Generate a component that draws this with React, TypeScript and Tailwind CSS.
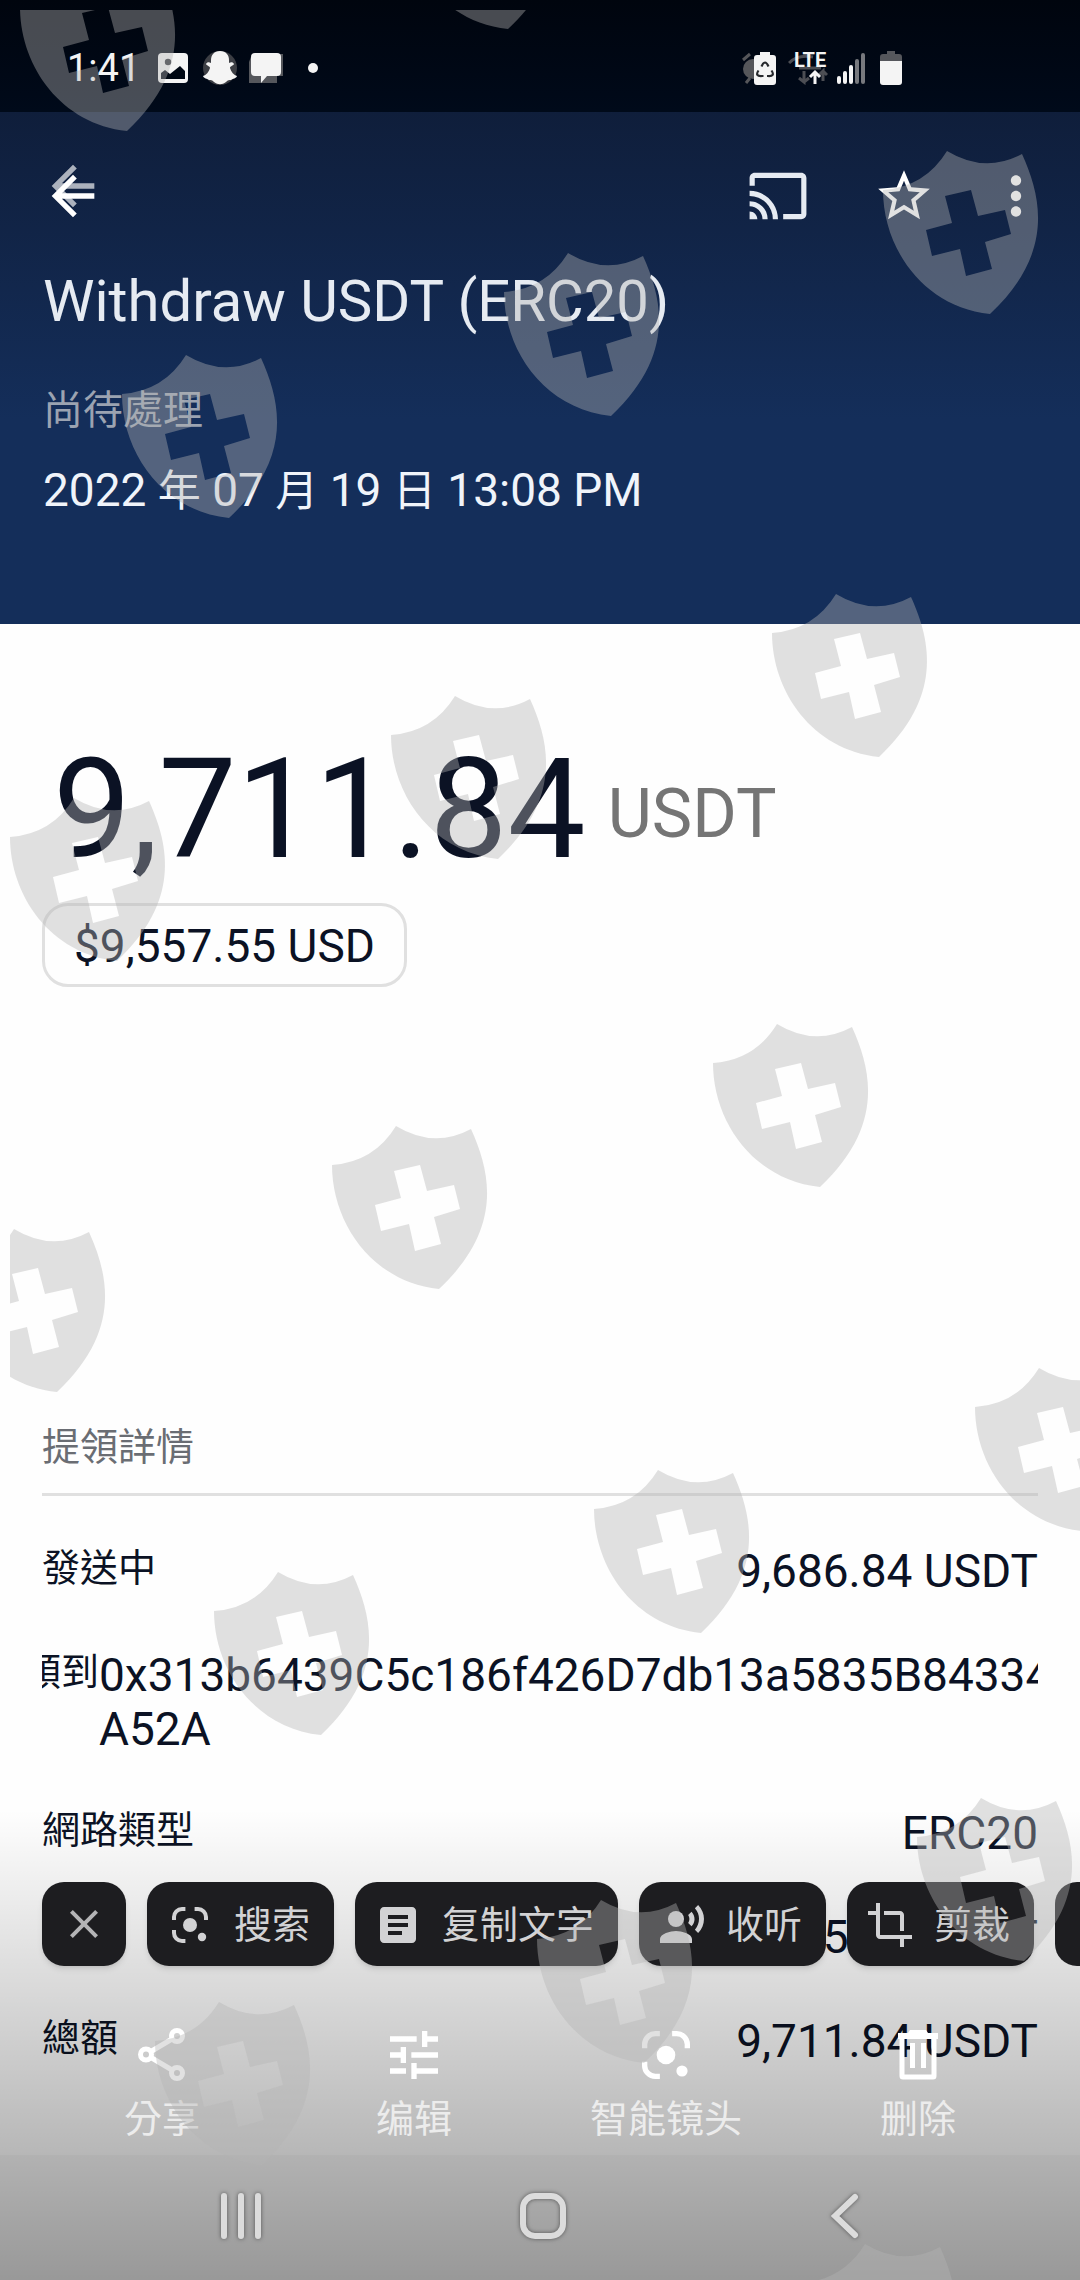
import type { ReactNode } from "react";
import {
  MdArrowBack,
  MdArticle,
  MdCast,
  MdClose,
  MdCrop,
  MdMoreVert,
  MdRecordVoiceOver,
  MdStarBorder,
  MdTune,
} from "react-icons/md";

function LensIcon({ className }: { className: string }) {
  return (
    <svg viewBox="0 0 24 24" className={className} fill="none" stroke="currentColor" strokeWidth="2" aria-hidden="true">
      <path d="M4 9.5V8a4 4 0 0 1 4-4h1.7M14.3 4H16a4 4 0 0 1 4 4v1.5M4 14.5V16a4 4 0 0 0 4 4h1.7" />
      <circle cx="12" cy="12" r="3.5" fill="currentColor" stroke="none" />
      <circle cx="18" cy="18" r="2.1" fill="currentColor" stroke="none" />
    </svg>
  );
}

function ShareIcon() {
  return (
    <svg viewBox="0 0 64 64" className="size-16" fill="none" stroke="currentColor" strokeWidth="5" aria-hidden="true">
      <path d="M21 28.500L42 16M21 34.500L42 47" />
      <circle cx="16" cy="31.500" r="5.500" />
      <circle cx="47" cy="13" r="5.500" />
      <circle cx="47" cy="50" r="5.500" />
    </svg>
  );
}

function TrashIcon() {
  return (
    <svg viewBox="0 0 64 64" className="size-16" fill="none" stroke="currentColor" aria-hidden="true">
      <path d="M12 10h10l2-3h16l2 3h10v6H12z" fill="currentColor" stroke="none" />
      <path d="M16 15v38a1 1 0 0 0 1 1h30a1 1 0 0 0 1-1V15" strokeWidth="5" />
      <path d="M26.500 20v25M37.500 20v25" strokeWidth="5" />
    </svg>
  );
}

const shields = [
  [20, -33], [401, -135],
  [883, 150], [504, 252], [122, 354],
  [772, 593], [391, 695], [10, 797],
  [713, 1023], [332, 1125], [-50, 1228],
  [975, 1367], [594, 1469], [214, 1571],
  [917, 1797], [537, 1899], [155, 2001],
];

const SHIELD_PATH =
  "M0 40Q42 37 64 1Q102 24 139 4C160 50 170 105 107 164C40 157 0 98 0 40ZM62 46L69 73L43 80L49 106L77 99L83 126L109 119L102 92L128 84L122 60L95 66L88 40Z";

function Watermark() {
  return (
    <div className="pointer-events-none absolute top-2.5 right-0 bottom-0 left-2.5 overflow-hidden" aria-hidden="true">
      <svg className="h-full w-full">
        {shields.map(([x, y]) => (
          <path
            key={`${x}:${y}`}
            d={SHIELD_PATH}
            transform={`translate(${x - 10} ${y - 10})`}
            fill="#b3b3b3"
            fillOpacity="0.4"
            fillRule="evenodd"
          />
        ))}
        <path d={SHIELD_PATH} transform="translate(791 2233)" fill="#b3b3b3" fillOpacity="0.4" fillRule="evenodd" />
      </svg>
    </div>
  );
}

function StatusBar() {
  return (
    <div className="flex h-28 items-center bg-linear-to-b from-[#00050e] to-[#000a1a] pt-6 pl-[67px] text-[#f4f4f4]">
      <span className="w-[91px] text-[38px] leading-[40px]">1:41</span>
      <svg viewBox="0 0 30 30" className="size-[30px]" aria-hidden="true">
        <rect width="30" height="30" rx="4" fill="currentColor" />
        <circle cx="10" cy="9" r="3.200" fill="#33363c" />
        <path d="M3 26v-6l4-3 5 4 10-8 5 5v8z" fill="#000814" />
      </svg>
      <svg viewBox="0 0 36 36" className="ml-3.5 size-9" aria-hidden="true">
        <circle cx="18" cy="18" r="17" fill="#3c3e44" />
        <path
          d="M18 1c6 0 9 4 9 9v3c2-1 4-1 5 1-1 2-4 2-4 4 1 4 4 7 7 8-1 3-4 2-6 4-2 0-3 0-5 2-4 3-8 3-12 0-2-2-3-2-5-2-2-2-5-1-6-4 3-1 6-4 7-8 0-2-3-2-4-4 1-2 3-2 5-1v-3c0-5 3-9 9-9z"
          fill="currentColor"
        />
      </svg>
      <svg viewBox="0 0 36 32" className="ml-2.5 h-8 w-9" aria-hidden="true">
        <path d="M4 2h31v22h-6v7H1V10z" fill="#55575c" />
        <path d="M7 1h22a4 4 0 0 1 4 4v15a4 4 0 0 1-4 4H19l-6 7v-7H7a4 4 0 0 1-4-4V5a4 4 0 0 1 4-4z" fill="currentColor" />
      </svg>
      <span className="ml-6 size-2.5 rounded-full bg-current" />
      <div className="mr-[178px] ml-auto flex items-center">
        <svg viewBox="0 0 34 34" className="h-[34px] w-[34px]" aria-hidden="true">
          <circle cx="11" cy="18" r="10" fill="#55565a" />
          <path d="M1 9l7-6M4 32l4-5" stroke="#55565a" strokeWidth="3" />
          <path d="M18 1h10v3h3a3 3 0 0 1 3 3v24a3 3 0 0 1-3 3H15a3 3 0 0 1-3-3V7a3 3 0 0 1 3-3h3z" fill="currentColor" />
          <path
            d="M19.500 15.500q3.500-8 7 0M29.500 19.500q4 6-3.500 5.500h-1M16.500 19.500q-4 6 3.500 5.500h1.500"
            fill="none"
            stroke="#26282c"
            strokeWidth="2.2"
          />
        </svg>
        <div className="relative ml-3 h-[34px] w-10">
          <svg viewBox="0 0 40 34" className="absolute inset-0 h-full w-full" fill="none" aria-hidden="true">
            <path d="M1 12q9-9 24-6M11 17h22M16 20v11l-5-4m5 4l5-4M35 30V20l-4 4m4-4l4 4" stroke="#4c4e54" strokeWidth="3" />
            <path d="M27 33V21M22 26l5-5 5 5" stroke="currentColor" strokeWidth="3" />
          </svg>
          <span className="absolute top-0 left-1.5 text-[20px] leading-[18px] font-bold">LTE</span>
        </div>
        <svg viewBox="0 0 30 34" className="ml-2 h-[34px] w-[30px]" strokeLinecap="round" strokeWidth="4" aria-hidden="true">
          <path d="M3 27v4M9 22v9M15 16v15" stroke="currentColor" />
          <path d="M21 10v21M27 4v27" stroke="#77797e" />
        </svg>
        <svg viewBox="0 0 22 34" className="ml-3.5 h-[34px] w-[22px]" aria-hidden="true">
          <path d="M7 0h8v3h4a3 3 0 0 1 3 3v5H0V6a3 3 0 0 1 3-3h4z" fill="#55575c" />
          <path d="M0 10h22v21a3 3 0 0 1-3 3H3a3 3 0 0 1-3-3z" fill="currentColor" />
        </svg>
      </div>
    </div>
  );
}

function DateUnit({ children }: { children: string }) {
  return <span className="text-[43px] leading-none">{children}</span>;
}

function Header() {
  return (
    <header className="bg-linear-to-b from-[#0f1e3b] to-[#142e5a] to-60% px-[43px] pb-[107px] text-[#e6ebf2]">
      <div className="flex h-[152px] items-center pt-4">
        <button type="button" aria-label="返回" className="relative -ml-0.5 size-16 text-white">
          <MdArrowBack className="absolute -top-2.5 left-0 size-16 opacity-65" />
          <MdArrowBack className="relative size-16" />
        </button>
        <button type="button" aria-label="投放" className="ml-auto">
          <MdCast className="size-[62px]" />
        </button>
        <button type="button" aria-label="收藏" className="ml-16 text-white">
          <MdStarBorder className="size-[62px]" />
        </button>
        <button type="button" aria-label="更多" className="-mr-[10px] ml-[50px] text-white">
          <MdMoreVert className="size-[62px]" />
        </button>
      </div>
      <h1 className="text-[58px] leading-[74px]">Withdraw USDT (ERC20)</h1>
      <p className="mt-[45px] text-[40px] leading-[56px] text-[#9ba3b1]">尚待處理</p>
      <p className="mt-6 text-[46px] leading-[54px] text-[#f0f4fa]">
        2022 <DateUnit>年</DateUnit> 07 <DateUnit>月</DateUnit> 19 <DateUnit>日</DateUnit> 13:08 PM
      </p>
    </header>
  );
}

function Row({ label, value }: { label?: string; value: string }) {
  return (
    <div className="flex items-start justify-between">
      <dt className="text-[38px] leading-[48px]">{label}</dt>
      <dd>{value}</dd>
    </div>
  );
}

function Chip({ icon, children }: { icon: ReactNode; children: ReactNode }) {
  return (
    <button
      type="button"
      className="flex h-[84px] shrink-0 items-center gap-5 rounded-[22px] bg-[#1d1d20] pt-0.5 pr-6 pl-[19px] text-[38px] whitespace-nowrap shadow-md"
    >
      {icon}
      {children}
    </button>
  );
}

function Action({ icon, label }: { icon: ReactNode; label: string }) {
  return (
    <button type="button" className="flex flex-col items-center text-white">
      {icon}
      <span className="mt-1 text-[38px] leading-[56px] text-[#ececec]">{label}</span>
    </button>
  );
}

function BottomOverlay() {
  return (
    <div className="absolute inset-x-0 bottom-0">
      <div className="bg-linear-to-b from-black/0 to-black/28 pt-[72px] pb-2">
        <div className="flex gap-[21px] overflow-hidden pb-[57px] pl-[42px] text-[#d2d2d4]">
          <button
            type="button"
            aria-label="关闭"
            className="flex size-[84px] shrink-0 items-center justify-center rounded-[22px] bg-[#1d1d20] text-[#b4b4b6] shadow-md"
          >
            <MdClose className="size-12" />
          </button>
          <Chip icon={<LensIcon className="size-12" />}>搜索</Chip>
          <Chip icon={<MdArticle className="size-12" />}>复制文字</Chip>
          <Chip icon={<MdRecordVoiceOver className="size-12" />}>收听</Chip>
          <Chip icon={<MdCrop className="size-12" />}>剪裁</Chip>
          <span className="h-[84px] w-20 shrink-0 rounded-[22px] bg-[#1d1d20]" />
        </div>
        <div className="grid grid-cols-4 px-9">
          <Action icon={<ShareIcon />} label="分享" />
          <Action icon={<MdTune className="size-16" />} label="编辑" />
          <Action icon={<LensIcon className="size-16" />} label="智能镜头" />
          <Action icon={<TrashIcon />} label="删除" />
        </div>
      </div>
      <nav className="grid h-[125px] grid-cols-3 items-center justify-items-center bg-linear-to-b from-black/30 to-black/40 pr-[84px] pb-1 pl-[90px] text-[#dcdcdc]">
        <button type="button" aria-label="最近" className="drop-shadow-[0_0_2px_#555]">
          <svg viewBox="0 0 46 48" className="h-12 w-[46px]" stroke="currentColor" strokeWidth="6" strokeLinecap="round" aria-hidden="true">
            <path d="M6 4v40M23 4v40M40 4v40" />
          </svg>
        </button>
        <button type="button" aria-label="主屏幕" className="drop-shadow-[0_0_2px_#555]">
          <svg viewBox="0 0 48 48" className="size-12" fill="none" stroke="currentColor" strokeWidth="6" aria-hidden="true">
            <rect x="4" y="4" width="40" height="40" rx="12" />
          </svg>
        </button>
        <button type="button" aria-label="后退" className="drop-shadow-[0_0_2px_#555]">
          <svg viewBox="0 0 28 48" className="h-12 w-7" fill="none" stroke="currentColor" strokeWidth="6" strokeLinecap="round" aria-hidden="true">
            <path d="M24 5L4 24l20 19" />
          </svg>
        </button>
      </nav>
    </div>
  );
}

export default function App() {
  return (
    <div className="relative min-h-screen overflow-hidden bg-[#fefefe] font-[Roboto,'Noto_Sans_CJK_TC',sans-serif] text-[#0b1224]">
      <StatusBar />
      <Header />
      <main className="px-[42px] pt-[106px] pb-[212px]">
        <p className="flex items-center gap-[22px] pl-[11px] text-[139px] leading-[160px]">
          9,711.84 <span className="pt-2 text-[68px] leading-[80px] text-[#757575]">USDT</span>
        </p>
        <p className="mt-[13px] flex h-[84px] w-fit items-center rounded-[26px] border-3 border-[#e0e0e0] px-[29px] pt-0.5 text-[46px]">
          $9,557.55 USD
        </p>
        <h2 className="mt-[432px] border-b-3 border-[#e0e0e0] pb-[18px] text-[38px] leading-[56px] text-[#6a6d73]">
          提領詳情
        </h2>
        <dl className="flex flex-col gap-[50px] pt-12 text-[46px] leading-[54px]">
          <Row label="發送中" value="9,686.84 USDT" />
          <div className="flex items-start overflow-hidden">
            <dt className="flex w-[57px] shrink-0 justify-end overflow-hidden text-[38px] leading-[48px] whitespace-nowrap">
              <span>領到</span>
            </dt>
            <dd className="whitespace-nowrap">
              0x313b6439C5c186f426D7db13a5835B84334
              <br />
              A52A
            </dd>
          </div>
          <Row label="網路類型" value="ERC20" />
          <Row value="25.00 USDT" />
          <Row label="總額" value="9,711.84 USDT" />
        </dl>
      </main>
      <BottomOverlay />
      <Watermark />
    </div>
  );
}
